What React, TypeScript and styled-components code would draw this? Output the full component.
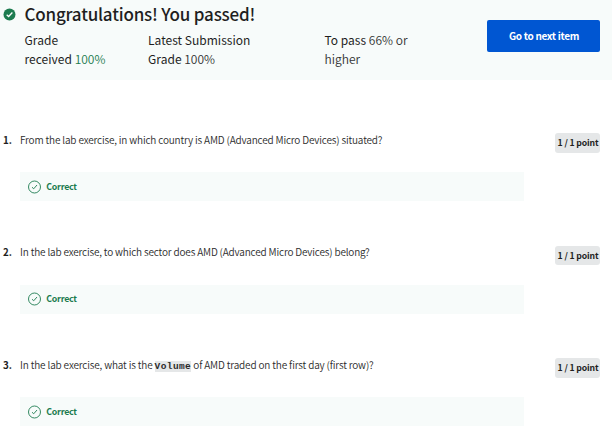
import React from "react";
import styled, { createGlobalStyle } from "styled-components";

const GlobalStyle = createGlobalStyle`
  * { box-sizing: border-box; }
  html, body { margin: 0; background: #fff; overflow: hidden; }
  body {
    font-family: "Noto Sans CJK SC", "Open Sans", sans-serif;
    color: #1f1f1f;
  }
`;

const Page = styled.main`
  width: 612px;
  height: 433px;
  overflow: hidden;
`;

const Banner = styled.header`
  display: flex;
  align-items: flex-start;
  height: 80px;
  padding: 0 12px 0 3px;
  background: #f7fbfa;
`;

const PassedIcon = styled.svg`
  flex: none;
  width: 13px;
  height: 13px;
  margin-top: 8px;
`;

const Summary = styled.div`
  flex: 1;
  padding: 3px 0 0 8.5px;
`;

const Title = styled.h1`
  margin: 0;
  font-size: 17px;
  font-weight: 500;
  line-height: 22px;
  letter-spacing: -0.2px;
  white-space: nowrap;
`;

const Stats = styled.div`
  display: grid;
  grid-template-columns: 123.5px 176.5px 100px;
  margin-top: 5px;
`;

const Stat = styled.p`
  margin: 0;
  font-size: 12px;
  font-weight: 400;
  line-height: 19px;
  letter-spacing: 0.02px;
  white-space: nowrap;
`;

const Value = styled.span<{ $passed?: boolean }>`
  font-weight: 350;
  color: ${(p) => (p.$passed ? "#1d7c50" : "#333")};
`;

const NextButton = styled.button`
  flex: none;
  width: 113px;
  height: 32px;
  margin-top: 20px;
  padding: 0 0 1px 1px;
  border: 0;
  border-radius: 2px;
  background: #0056d2;
  color: #fff;
  font: 700 10px/30px "Noto Sans CJK SC", "Open Sans", sans-serif;
  letter-spacing: -0.3px;
  white-space: nowrap;
`;

const Questions = styled.ol`
  margin: 0;
  padding: 52.5px 12px 0 3px;
  list-style: none;
`;

const Question = styled.li`
  height: 112.5px;
`;

const Prompt = styled.div`
  display: flex;
  align-items: flex-start;
  height: 39.7px;
`;

const Ordinal = styled.span`
  width: 17px;
  font-size: 9.8px;
  font-weight: 700;
  line-height: 14px;
`;

const QuestionText = styled.p<{ $tracking: number }>`
  flex: 1;
  margin: 0;
  color: #2b2b2b;
  font-size: 10px;
  font-weight: 350;
  line-height: 14px;
  letter-spacing: ${(p) => p.$tracking}px;
  white-space: nowrap;
`;

const Code = styled.code`
  display: inline-block;
  height: 11px;
  background: #e5e7e8;
  font: 700 9.5px/11px "Liberation Mono", monospace;
  letter-spacing: 0.4px;
`;

const Points = styled.span`
  flex: none;
  width: 45px;
  height: 19.5px;
  margin-top: 0.5px;
  padding-left: 1px;
  border-radius: 3px;
  background: #e5e7e8;
  font-size: 8.7px;
  font-weight: 700;
  line-height: 20px;
  letter-spacing: -0.15px;
  text-align: center;
  white-space: nowrap;
`;

const Feedback = styled.div`
  display: flex;
  align-items: center;
  width: 504px;
  height: 29.3px;
  margin-left: 17px;
  padding-left: 8px;
  background: #f7fbfa;
  color: #1d7c50;
  font-size: 8.8px;
  font-weight: 700;
`;

const CorrectIcon = styled.svg`
  width: 13px;
  height: 14px;
  margin-right: 5.3px;
`;

const FeedbackLabel = styled.span`
  line-height: 14px;
  letter-spacing: -0.25px;
`;

const questions: { text: React.ReactNode; tracking: number }[] = [
  {
    text: "From the lab exercise, in which country is AMD (Advanced Micro Devices) situated?",
    tracking: -0.165,
  },
  {
    text: "In the lab exercise, to which sector does AMD (Advanced Micro Devices) belong?",
    tracking: -0.17,
  },
  {
    text: (
      <>
        In the lab exercise, what is the <Code>Volume</Code> of AMD traded on the first day (first row)?
      </>
    ),
    tracking: -0.155,
  },
];

export default function App() {
  return (
    <Page>
      <GlobalStyle />
      <Banner>
        <PassedIcon viewBox="0 0 13 13">
          <circle cx="6.5" cy="6.5" r="6" fill="#1d7c50" />
          <path d="M3.7 6.7 5.6 8.5 9.4 4.5" fill="none" stroke="#fff" strokeWidth="1.3" />
        </PassedIcon>
        <Summary>
          <Title>Congratulations! You passed!</Title>
          <Stats>
            <Stat>
              Grade
              <br />
              received <Value $passed>100%</Value>
            </Stat>
            <Stat>
              Latest Submission
              <br />
              Grade <Value>100%</Value>
            </Stat>
            <Stat>
              To pass <Value>66% or</Value>
              <br />
              <Value>higher</Value>
            </Stat>
          </Stats>
        </Summary>
        <NextButton>Go to next item</NextButton>
      </Banner>
      <Questions>
        {questions.map((q, i) => (
          <Question key={i}>
            <Prompt>
              <Ordinal>{i + 1}.</Ordinal>
              <QuestionText $tracking={q.tracking}>{q.text}</QuestionText>
              <Points>1 / 1 point</Points>
            </Prompt>
            <Feedback>
              <CorrectIcon viewBox="0 0 13 14" fill="none" stroke="#1d7c50">
                <circle cx="6.5" cy="7" r="6" strokeWidth="0.9" />
                <path d="M4 7.2 5.7 8.8 9 5" strokeWidth="0.9" />
              </CorrectIcon>
              <FeedbackLabel>Correct</FeedbackLabel>
            </Feedback>
          </Question>
        ))}
      </Questions>
    </Page>
  );
}
